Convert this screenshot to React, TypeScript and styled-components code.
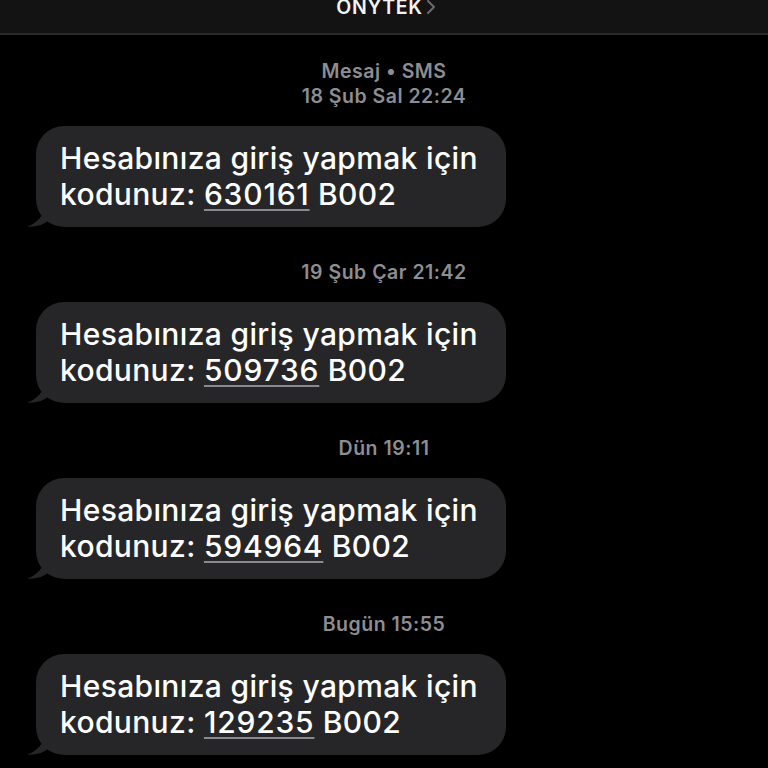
import React from 'react';
import styled, { createGlobalStyle } from 'styled-components';

const GlobalStyle = createGlobalStyle`
  html, body {
    margin: 0;
    padding: 0;
    background: #000;
  }
  body {
    font-family: Inter, "Noto Sans", "Liberation Sans", sans-serif;
    -webkit-font-smoothing: antialiased;
  }
`;

const Screen = styled.div`
  width: 768px;
  height: 768px;
  overflow: hidden;
  background: #000;
  display: flex;
  flex-direction: column;
`;

const Header = styled.header`
  height: 35px;
  flex-shrink: 0;
  background: #131313;
  border-bottom: 2px solid #2a2a2a;
  display: flex;
  justify-content: center;
  align-items: flex-end;
  padding-bottom: 16px;
  box-sizing: border-box;
`;

const Contact = styled.div`
  display: flex;
  align-items: center;
  gap: 3px;
  color: #f2f2f2;
  font-size: 19.5px;
  font-weight: 600;
  letter-spacing: 0.7px;
  line-height: 1;
  margin-left: 4px;
`;

const Thread = styled.main`
  display: flex;
  flex-direction: column;
  padding: 24px 0 0 36px;
`;

const Stamp = styled.div<{ $first?: boolean }>`
  width: 768px;
  margin-left: -36px;
  text-align: center;
  color: #8d8d92;
  font-size: 19.5px;
  font-weight: 600;
  letter-spacing: 0.5px;
  line-height: 25px;
  margin-top: ${p => (p.$first ? '0' : '33px')};
  margin-bottom: 17px;
`;

const Bubble = styled.div`
  position: relative;
  width: 470px;
  box-sizing: border-box;
  background: #262628;
  border-radius: 28px;
  padding: 14px 20px 15px 24px;
  color: #fff;
  font-size: 30px;
  font-weight: 500;
  letter-spacing: 0.35px;
  line-height: 36px;
`;

const Tail = styled.svg`
  position: absolute;
  left: -9px;
  bottom: 0;
`;

const Code = styled.span`
  letter-spacing: 0.8px;
  text-decoration: underline;
  text-decoration-color: #8a8a8e;
  text-decoration-thickness: 2px;
  text-underline-offset: 4px;
`;

interface Msg {
  stamp: string[];
  code: string;
}

const messages: Msg[] = [
  { stamp: ['Mesaj • SMS', '18 Şub Sal 22:24'], code: '630161' },
  { stamp: ['19 Şub Çar 21:42'], code: '509736' },
  { stamp: ['Dün 19:11'], code: '594964' },
  { stamp: ['Bugün 15:55'], code: '129235' },
];

const Chevron = () => (
  <svg width="10" height="16" viewBox="0 0 10 16">
    <path d="M2 2 L8 8 L2 14" fill="none" stroke="#6b6b6f" strokeWidth="2" strokeLinecap="round" strokeLinejoin="round" />
  </svg>
);

export default function App() {
  return (
    <Screen>
      <GlobalStyle />
      <Header>
        <Contact>
          ONYTEK
          <Chevron />
        </Contact>
      </Header>
      <Thread>
        {messages.map((m, i) => (
          <React.Fragment key={m.code}>
            <Stamp $first={i === 0}>
              {m.stamp.map(s => (
                <div key={s}>{s}</div>
              ))}
            </Stamp>
            <Bubble>
              <Tail width="30" height="26" viewBox="0 0 30 26">
                <path d="M18 0 C18 12 14 20 0 26 C10 26 18 23 24 18 Z" fill="#262628" />
              </Tail>
              Hesabınıza giriş yapmak için
              <br />
              kodunuz: <Code>{m.code}</Code> B002
            </Bubble>
          </React.Fragment>
        ))}
      </Thread>
    </Screen>
  );
}
